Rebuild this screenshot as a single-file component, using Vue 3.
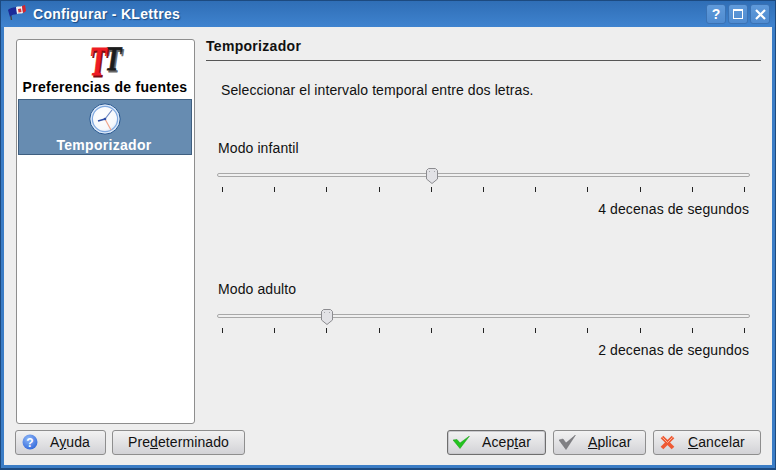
<script setup>
const sliders = [
  { label: 'Modo infantil', value: 4, text: '4 decenas de segundos' },
  { label: 'Modo adulto', value: 2, text: '2 decenas de segundos' },
];
const ticks = Array.from({ length: 11 }, (_, i) => i);

// 522px of travel between first and last tick, 10 steps
const thumbLeft = (value) => `${Math.round(value * 52.2)}px`;
</script>

<template>
  <div class="window">
    <header class="titlebar">
      <svg class="flag" width="20" height="18" viewBox="0 0 20 18">
        <path d="M3 6 L4.5 15" stroke="#444" stroke-width="1.4" />
        <path d="M1 5 C4 2 7 3 9 2 L10 9 C7 10 5 9 3 12 Z" fill="#1a2a98" />
        <path d="M9 2 C11 1 14 2 15 1 L16 8 C14 9 12 8 10 9 Z" fill="#f6f2f0" />
        <path d="M11 4 L14 3.5 L14.5 7 L11.5 7.5 Z" fill="#d8343c" />
        <path d="M15 1 C16 .5 17 .5 18 0 L19 6 C18 7 17 7.5 16 8 Z" fill="#d8242c" />
      </svg>
      <span class="title">Configurar - KLettres</span>
      <div class="wm-buttons">
        <span class="wm-btn wm-help">?</span>
        <span class="wm-btn"><i class="wm-max"></i></span>
        <span class="wm-btn">
          <svg width="11" height="11" viewBox="0 0 11 11">
            <path d="M1 1 L10 10 M10 1 L1 10" stroke="#fff" stroke-width="2.2" />
          </svg>
        </span>
      </div>
    </header>

    <div class="body">
      <div class="main">
        <aside class="sidebar">
          <div class="side-item">
            <svg class="side-icon tt-icon" width="38" height="36" viewBox="0 0 38 36">
              <g class="tt">
                <text transform="matrix(.66 0 -.14 .95 19 29)" fill="#666" stroke="#666" stroke-width=".8">T</text>
                <text transform="matrix(.66 0 -.14 .95 17.5 27)" fill="#1c1c1c" stroke="#1c1c1c" stroke-width=".8">T</text>
                <text transform="matrix(.66 0 -.14 1.15 4 34)" fill="#7a0c10" stroke="#7a0c10" stroke-width="1">T</text>
                <text transform="matrix(.66 0 -.14 1.15 2.5 32)" fill="#ee1c24" stroke="#ee1c24" stroke-width=".8">T</text>
              </g>
            </svg>
            <span>Preferencias de fuentes</span>
          </div>
          <div class="side-item selected">
            <svg class="side-icon" width="34" height="34" viewBox="0 0 34 34">
              <defs>
                <radialGradient id="face" cx="0.4" cy="0.35" r="0.8">
                  <stop offset="0" stop-color="#ffffff" />
                  <stop offset="0.7" stop-color="#f6f8fc" />
                  <stop offset="1" stop-color="#c6d8f0" />
                </radialGradient>
              </defs>
              <circle cx="17" cy="17" r="15.2" fill="#dbe8f8" stroke="#24558f" stroke-width="1" />
              <circle cx="17" cy="17" r="12.6" fill="url(#face)" stroke="#7ea8e0" stroke-width="1.2" />
              <path d="M17 17 L23 28" stroke="#f0a58c" stroke-width="1.2" />
              <path d="M17 17 L24 8" stroke="#6a86c0" stroke-width="1.2" />
              <path d="M10 19 L17 17" stroke="#2f4fa8" stroke-width="1.8" />
              <circle cx="17" cy="17" r="1.3" fill="#2f4fa8" />
            </svg>
            <span>Temporizador</span>
          </div>
        </aside>

        <section class="panel">
          <h2 class="panel-title">Temporizador</h2>
          <p class="desc">Seleccionar el intervalo temporal entre dos letras.</p>

          <div v-for="s in sliders" :key="s.label" class="setting">
            <label class="setting-label">{{ s.label }}</label>
            <div class="slider">
              <div class="track"></div>
              <svg class="thumb" :style="{ left: thumbLeft(s.value) }" width="12" height="16" viewBox="0 0 12 16">
                <path d="M2.5 .5 H9.5 L11.5 2.5 V11 L6 15.5 L.5 11 V2.5 Z" fill="#e2e2e6" stroke="#8c8c90" />
                <path d="M3 4 L4 3 M8 3 L9 4" stroke="#a8a8ac" />
              </svg>
            </div>
            <div class="ticks">
              <i v-for="t in ticks" :key="t" class="tick"></i>
            </div>
            <div class="setting-value">{{ s.text }}</div>
          </div>
        </section>
      </div>

      <footer class="buttons">
        <div class="group-left">
          <button class="btn btn-help">
            <svg width="16" height="16" viewBox="0 0 16 16">
              <defs>
                <radialGradient id="blue" cx="0.4" cy="0.3" r="0.8">
                  <stop offset="0" stop-color="#8fb8f8" />
                  <stop offset="1" stop-color="#2b62d8" />
                </radialGradient>
              </defs>
              <circle cx="8" cy="8" r="7.5" fill="url(#blue)" />
              <text x="8" y="12.5" class="help-mark">?</text>
            </svg>
            <span>A<u>y</u>uda</span>
          </button>
          <button class="btn btn-default">Pre<u>d</u>eterminado</button>
        </div>
        <div class="group-right">
          <button class="btn btn-ok focused">
            <svg width="17" height="13" viewBox="0 0 17 13">
              <path d="M0 4 L4 3.5 L7 7 L16.5 0 L7 12.5 Z" fill="#22c41e" stroke="#149a12" stroke-width=".5" />
            </svg>
            <span>Acep<u>t</u>ar</span>
          </button>
          <button class="btn btn-apply">
            <svg width="17" height="15" viewBox="0 0 17 15">
              <path d="M0 5 L4 4 L7 8 L16.5 0 L7 14.5 Z" fill="#808084" stroke="#68686c" stroke-width=".5" />
            </svg>
            <span><u>A</u>plicar</span>
          </button>
          <button class="btn btn-cancel">
            <svg width="15" height="15" viewBox="0 0 15 15">
              <path d="M2 2 L13 13 M13 2 L2 13" stroke="#ee5a34" stroke-width="3.8" />
              <path d="M2.5 2.5 L7.5 7.5 M12.5 2.5 L7.5 7.5" stroke="#fbb49a" stroke-width="1" />
            </svg>
            <span><u>C</u>ancelar</span>
          </button>
        </div>
      </footer>
    </div>
  </div>
</template>

<style scoped>
.window {
  width: 776px;
  height: 470px;
  box-sizing: border-box;
  display: flex;
  flex-direction: column;
  background: #3b7dc6;
  border: 1px solid #1c4a80;
  border-bottom-width: 2px;
  font-family: "Liberation Sans", Arial, sans-serif;
  color: #111;
  overflow: hidden;
}

.titlebar {
  height: 26px;
  flex: none;
  display: flex;
  align-items: center;
  padding: 0 4px 0 6px;
  background: linear-gradient(#2f6eb6, #3f83cf);
}

.flag {
  margin-right: 6px;
}

.title {
  color: #fff;
  font-size: 14px;
  font-weight: bold;
  letter-spacing: 0.3px;
  text-shadow: 1px 1px 1px #1c4a80;
}

.wm-buttons {
  margin-left: auto;
  display: flex;
  gap: 2px;
  margin-right: 1px;
}

.wm-btn {
  width: 20px;
  height: 20px;
  box-sizing: border-box;
  display: flex;
  align-items: center;
  justify-content: center;
  border: 1px solid #3a72b4;
  border-radius: 3px;
  background: linear-gradient(#5f9ada, #4f8bd0);
  color: #fff;
}

.wm-help {
  font-size: 14px;
  font-weight: bold;
}

.wm-max {
  display: block;
  width: 8px;
  height: 7px;
  border: 1px solid #fff;
  border-top-width: 2px;
}

.body {
  flex: 1;
  min-height: 0;
  margin: 0 3px 3px;
  background: #eeeeee;
  display: flex;
  flex-direction: column;
  padding: 12px 11px 10px 12px;
  letter-spacing: 0.1px;
}

.main {
  flex: 1;
  min-height: 0;
  display: flex;
  gap: 11px;
}

.sidebar {
  width: 179px;
  box-sizing: border-box;
  background: #fff;
  border: 1px solid #8e8e8e;
  border-radius: 3px;
  padding: 1px 2px 1px 1px;
  flex: none;
}

.side-item {
  height: 58px;
  box-sizing: border-box;
  display: flex;
  flex-direction: column;
  align-items: center;
  font-size: 14px;
  font-weight: bold;
  letter-spacing: 0.3px;
  color: #000;
}

.side-item .side-icon {
  margin-top: 2px;
  flex: none;
}

.tt-icon {
  overflow: visible;
}

.side-item span {
  line-height: 16px;
}

.side-item.selected {
  height: 56px;
  background: #678cb1;
  border: 1px solid #3f5f80;
  color: #fff;
}

.side-item.selected span {
  margin-top: 1px;
  margin-right: 2px;
}

.tt text {
  font-family: "Liberation Serif", serif;
  font-size: 36px;
  font-weight: bold;
}

.panel {
  flex: 1;
  min-width: 0;
}

.panel-title {
  margin: 0;
  height: 22px;
  box-sizing: border-box;
  font-size: 14px;
  line-height: 15px;
  font-weight: bold;
  letter-spacing: 0.3px;
  border-bottom: 1px solid #555;
}

.desc {
  margin: 21px 0 0 15px;
  font-size: 14px;
  line-height: 17px;
  height: 17px;
}

.setting {
  margin: 0 11px 0 11px;
  padding-top: 41px;
  height: 141px;
  box-sizing: border-box;
}

.setting-label {
  display: block;
  margin-left: 1px;
  font-size: 14px;
  line-height: 17px;
}

.slider {
  position: relative;
  height: 16px;
  margin-top: 11px;
}

.track {
  position: absolute;
  left: 0;
  right: 0;
  top: 5px;
  height: 4px;
  box-sizing: border-box;
  background: #f0f0f0;
  border: 1px solid #a8a8a8;
  border-radius: 2px;
}

.thumb {
  position: absolute;
  top: 0;
}

.ticks {
  display: flex;
  justify-content: space-between;
  margin: 3px 5px 0;
}

.tick {
  display: block;
  width: 1px;
  height: 5px;
  background: #222;
}

.setting-value {
  margin-top: 9px;
  padding-right: 1px;
  text-align: right;
  font-size: 14px;
  line-height: 17px;
}

.buttons {
  flex: none;
  display: flex;
  justify-content: space-between;
  margin: 6px 0 0 -1px;
}

.group-left {
  display: flex;
  gap: 6px;
}

.group-right {
  display: flex;
  gap: 7px;
}

.btn {
  height: 25px;
  box-sizing: border-box;
  padding: 0 0 1px;
  display: flex;
  align-items: center;
  border: 1px solid #8e8e8e;
  border-radius: 3px;
  background: linear-gradient(#f2f2f2, #d2d2d6);
  font: 14px "Liberation Sans", Arial, sans-serif;
  letter-spacing: 0.1px;
  color: #111;
}

.btn svg {
  flex: none;
}

.btn-help {
  width: 91px;
  padding-left: 6px;
  gap: 12px;
}

.btn-default {
  width: 133px;
  justify-content: center;
}

.btn-ok {
  width: 99px;
  padding-left: 5px;
  gap: 12px;
}

.btn-apply {
  width: 93px;
  padding-left: 5px;
  gap: 12px;
}

.btn-cancel {
  width: 108px;
  padding-left: 6px;
  gap: 13px;
}

.focused {
  border-color: #6e6e6e;
  box-shadow: 0 0 0 1px #c8c8cc inset;
}

.help-mark {
  font-family: "Liberation Sans", sans-serif;
  font-size: 12px;
  font-weight: bold;
  fill: #fff;
  text-anchor: middle;
}
</style>

<style>
html, body {
  margin: 0;
  background: #eeeeee;
}
</style>
